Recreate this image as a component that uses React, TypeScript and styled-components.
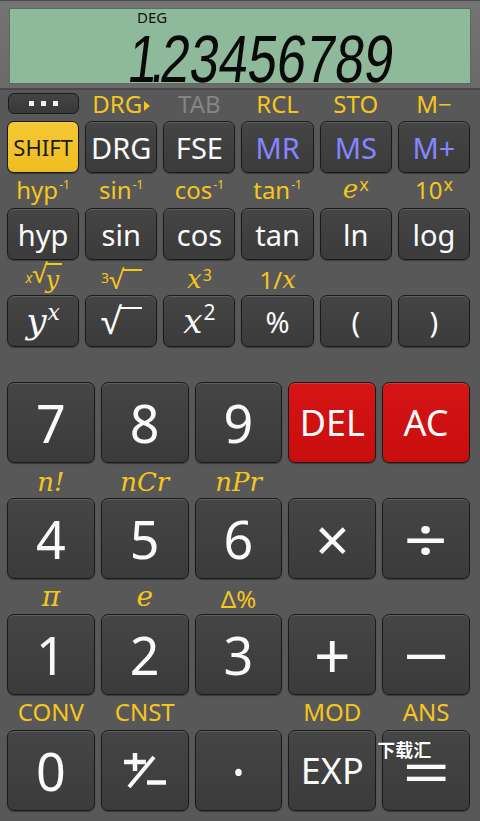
import React from 'react';
import styled, { createGlobalStyle, css } from 'styled-components';

const Global = createGlobalStyle`
  html, body { margin: 0; padding: 0; background: #575757; }
  #root { width: 480px; height: 821px; overflow: hidden; }
  * { box-sizing: border-box; }
`;

const SANS = `"Noto Sans", "Open Sans", "DejaVu Sans", sans-serif`;
const SERIF = `"DejaVu Serif", "Liberation Serif", serif`;

const Page = styled.div`
  width: 480px;
  height: 821px;
  background: #585858;
  display: flex;
  flex-direction: column;
  font-family: ${SANS};
`;

const Display = styled.div`
  height: 90px;
  padding: 7px 9px 4px 9px;
  background: linear-gradient(#747474, #6a6a6a);
  border-top: 1px solid #4a4a4a;
  border-bottom: 2px solid #474747;
`;

const Lcd = styled.div`
  height: 100%;
  background: #8fb99b;
  border: 1px solid #5c6a60;
  display: flex;
  flex-direction: column;
  padding: 1px 76px 0 0;
`;

const Indicators = styled.div`
  height: 17px;
  padding-left: 127px;
  display: flex;
  align-items: flex-start;
`;

const DegText = styled.span`
  font-family: ${SANS};
  font-size: 15px;
  line-height: 1;
  color: #111;
`;

const LcdNumber = styled.div`
  flex: 1;
  display: flex;
  justify-content: flex-end;
  align-items: center;
  padding-bottom: 6px;
`;

const LcdDigits = styled.span`
  font-family: "Liberation Sans", "Arial", sans-serif;
  font-size: 67px;
  line-height: 1;
  color: #0a0a0a;
  transform: skewX(-7deg) scaleX(0.78);
  transform-origin: right center;
  white-space: nowrap;
`;

const LcdDot = styled.span`
  margin: 0 -6px 0 -8px;
`;

const Keypad = styled.div`
  padding: 0 10px 0 7px;
  display: flex;
  flex-direction: column;
`;

const LabelRow = styled.div<{ $h: number; $cols: number; $pad?: number }>`
  display: grid;
  grid-template-columns: repeat(${(p) => p.$cols}, 1fr);
  column-gap: 6px;
  height: ${(p) => p.$h}px;
  padding-bottom: ${(p) => p.$pad ?? 8}px;
`;

const Label = styled.div<{ $muted?: boolean }>`
  display: flex;
  align-items: flex-end;
  justify-content: center;
  color: ${(p) => (p.$muted ? '#858585' : '#f6c61b')};
  font-size: 24px;
  line-height: 1;
  white-space: nowrap;
`;

const KeyRow = styled.div<{ $cols: number }>`
  display: grid;
  grid-template-columns: repeat(${(p) => p.$cols}, 1fr);
  column-gap: 6px;
`;

type Kind = 'dark' | 'shift' | 'red';

const faces: Record<Kind, ReturnType<typeof css>> = {
  dark: css`
    background: linear-gradient(#454545, #3b3b3b);
    color: #fafafa;
  `,
  shift: css`
    background: linear-gradient(#f5c834, #eebd22);
    color: #1a1a1a;
  `,
  red: css`
    background: linear-gradient(#d61515, #c90d0d);
    color: #fafafa;
  `,
};

const Key = styled.div<{ $big?: boolean; $kind?: Kind; $ink?: string; $fs?: number }>`
  position: relative;
  height: ${(p) => (p.$big ? 81 : 52)}px;
  border-radius: 7px;
  border: 1.5px solid #1a1a1a;
  ${(p) => faces[p.$kind ?? 'dark']}
  ${(p) => (p.$ink ? `color: ${p.$ink};` : '')}
  font-size: ${(p) => p.$fs ?? (p.$big ? 36 : 29)}px;
  line-height: 1;
  display: flex;
  align-items: center;
  justify-content: center;
  white-space: nowrap;
  box-shadow: inset 0 1px 0 rgba(255, 255, 255, 0.14), 0 1px 1px rgba(0, 0, 0, 0.35);
`;

const Wide = styled.span<{ $sx: number }>`
  display: inline-block;
  transform: scaleX(${(p) => p.$sx});
`;

const DotsKey = styled.div`
  width: 71px;
  height: 21px;
  margin-top: 3px;
  border-radius: 6px;
  border: 1.5px solid #1c1c1c;
  background: linear-gradient(#444, #393939);
  display: flex;
  align-items: center;
  justify-content: center;
  gap: 7px;
  align-self: flex-start;
`;

const DotSquare = styled.span`
  width: 5px;
  height: 5px;
  background: #f2f2f2;
`;

const Sup = styled.span<{ $fs?: number; $rise?: number; $italic?: boolean }>`
  font-size: ${(p) => p.$fs ?? 12}px;
  position: relative;
  top: -${(p) => p.$rise ?? 11}px;
  margin-left: 1px;
  font-style: ${(p) => (p.$italic ? 'italic' : 'normal')};
`;

const Ital = styled.span<{ $fs?: number }>`
  font-family: ${SERIF};
  font-style: italic;
  ${(p) => (p.$fs ? `font-size: ${p.$fs}px;` : '')}
`;

const Radical = styled.span<{ $fs?: number }>`
  display: inline-flex;
  align-items: flex-start;
  ${(p) => (p.$fs ? `font-size: ${p.$fs}px;` : '')}
`;

const Vinculum = styled.span<{ $w: number }>`
  display: inline-block;
  border-top: 2px solid currentColor;
  min-width: ${(p) => p.$w}px;
  margin-top: 0.12em;
  margin-left: -1px;
`;

const Caret = styled.span`
  width: 0;
  height: 0;
  border-top: 5px solid transparent;
  border-bottom: 5px solid transparent;
  border-left: 6px solid currentColor;
  margin: 0 0 5px 2px;
`;

const PlusMinusIcon = () => (
  <svg width="44" height="36" viewBox="0 0 44 36" fill="none" stroke="#fafafa" strokeWidth={4.5}>
    <line x1="1" y1="9" x2="23" y2="9" />
    <line x1="12" y1="0" x2="12" y2="18" />
    <line x1="6" y1="34" x2="31" y2="4" strokeWidth={4} />
    <line x1="24" y1="29.5" x2="43" y2="29.5" />
  </svg>
);

const Watermark = styled.span`
  position: absolute;
  left: -6px;
  top: 9px;
  font-family: "Noto Sans CJK SC", sans-serif;
  font-weight: 700;
  font-size: 18px;
  color: #ffffff;
  letter-spacing: 0;
  text-shadow: 0 0 1px #000;
`;

export default function App() {
  return (
    <Page>
      <Global />
      <Display>
        <Lcd>
          <Indicators>
            <DegText>DEG</DegText>
          </Indicators>
          <LcdNumber>
            <LcdDigits>
              1<LcdDot>.</LcdDot>23456789
            </LcdDigits>
          </LcdNumber>
        </Lcd>
      </Display>

      <Keypad>
        <LabelRow $h={31} $cols={6} $pad={5}>
          <Label>
            <DotsKey>
              <DotSquare />
              <DotSquare />
              <DotSquare />
            </DotsKey>
          </Label>
          <Label>
            DRG<Caret />
          </Label>
          <Label $muted>TAB</Label>
          <Label>RCL</Label>
          <Label>STO</Label>
          <Label>M−</Label>
        </LabelRow>
        <KeyRow $cols={6}>
          <Key $kind="shift" $fs={22}>SHIFT</Key>
          <Key>DRG</Key>
          <Key>FSE</Key>
          <Key $ink="#8585ff">MR</Key>
          <Key $ink="#8585ff">MS</Key>
          <Key $ink="#8585ff">M+</Key>
        </KeyRow>

        <LabelRow $h={35} $cols={6} $pad={6}>
          <Label>
            hyp<Sup>-1</Sup>
          </Label>
          <Label>
            sin<Sup>-1</Sup>
          </Label>
          <Label>
            cos<Sup>-1</Sup>
          </Label>
          <Label>
            tan<Sup>-1</Sup>
          </Label>
          <Label>
            <Ital $fs={26}>e</Ital>
            <Sup $fs={18} $rise={9}>x</Sup>
          </Label>
          <Label>
            10<Sup $fs={18} $rise={9}>x</Sup>
          </Label>
        </LabelRow>
        <KeyRow $cols={6}>
          <Key>hyp</Key>
          <Key>sin</Key>
          <Key>cos</Key>
          <Key>tan</Key>
          <Key>ln</Key>
          <Key>log</Key>
        </KeyRow>

        <LabelRow $h={35} $cols={6} $pad={8}>
          <Label>
            <Sup $fs={14} $rise={7} $italic>x</Sup>
            <Radical $fs={26}>
              √<Vinculum $w={16}><Ital $fs={24}>y</Ital></Vinculum>
            </Radical>
          </Label>
          <Label>
            <Sup $fs={14} $rise={7}>3</Sup>
            <Radical $fs={26}>
              √<Vinculum $w={20} />
            </Radical>
          </Label>
          <Label>
            <Ital $fs={26}>x</Ital>
            <Sup $fs={16} $rise={9}>3</Sup>
          </Label>
          <Label>
            1/<Ital>x</Ital>
          </Label>
          <Label />
          <Label />
        </LabelRow>
        <KeyRow $cols={6}>
          <Key>
            <Ital $fs={36}>y</Ital>
            <Sup $fs={22} $rise={9}>
              <Ital>x</Ital>
            </Sup>
          </Key>
          <Key>
            <Radical $fs={36}>
              √<Vinculum $w={22} />
            </Radical>
          </Key>
          <Key>
            <Ital $fs={34}>x</Ital>
            <Sup $fs={21} $rise={9}>2</Sup>
          </Key>
          <Key>%</Key>
          <Key>(</Key>
          <Key>)</Key>
        </KeyRow>

        <LabelRow $h={35} $cols={5} />
        <KeyRow $cols={5}>
          <Key $big $fs={52}>7</Key>
          <Key $big $fs={52}>8</Key>
          <Key $big $fs={52}>9</Key>
          <Key $big $kind="red">DEL</Key>
          <Key $big $kind="red">AC</Key>
        </KeyRow>

        <LabelRow $h={35} $cols={5} $pad={3}>
          <Label>
            <Ital $fs={26}>n!</Ital>
          </Label>
          <Label>
            <Ital $fs={26}>nCr</Ital>
          </Label>
          <Label>
            <Ital $fs={26}>nPr</Ital>
          </Label>
          <Label />
          <Label />
        </LabelRow>
        <KeyRow $cols={5}>
          <Key $big $fs={52}>4</Key>
          <Key $big $fs={52}>5</Key>
          <Key $big $fs={52}>6</Key>
          <Key $big $fs={60}>×</Key>
          <Key $big $fs={62}>
            <Wide $sx={1.25}>÷</Wide>
          </Key>
        </KeyRow>

        <LabelRow $h={35} $cols={5} $pad={3}>
          <Label>
            <Ital $fs={28}>π</Ital>
          </Label>
          <Label>
            <Ital $fs={28}>e</Ital>
          </Label>
          <Label>Δ%</Label>
          <Label />
          <Label />
        </LabelRow>
        <KeyRow $cols={5}>
          <Key $big $fs={52}>1</Key>
          <Key $big $fs={52}>2</Key>
          <Key $big $fs={52}>3</Key>
          <Key $big $fs={64}>+</Key>
          <Key $big $fs={60}>
            <Wide $sx={1.35}>−</Wide>
          </Key>
        </KeyRow>

        <LabelRow $h={35} $cols={5} $pad={6}>
          <Label>CONV</Label>
          <Label>CNST</Label>
          <Label />
          <Label>MOD</Label>
          <Label>ANS</Label>
        </LabelRow>
        <KeyRow $cols={5}>
          <Key $big $fs={52}>0</Key>
          <Key $big>
            <PlusMinusIcon />
          </Key>
          <Key $big $fs={52}>·</Key>
          <Key $big>EXP</Key>
          <Key $big $fs={60}>
            <Wide $sx={1.4}>=</Wide>
            <Watermark>下载汇</Watermark>
          </Key>
        </KeyRow>
      </Keypad>
    </Page>
  );
}
